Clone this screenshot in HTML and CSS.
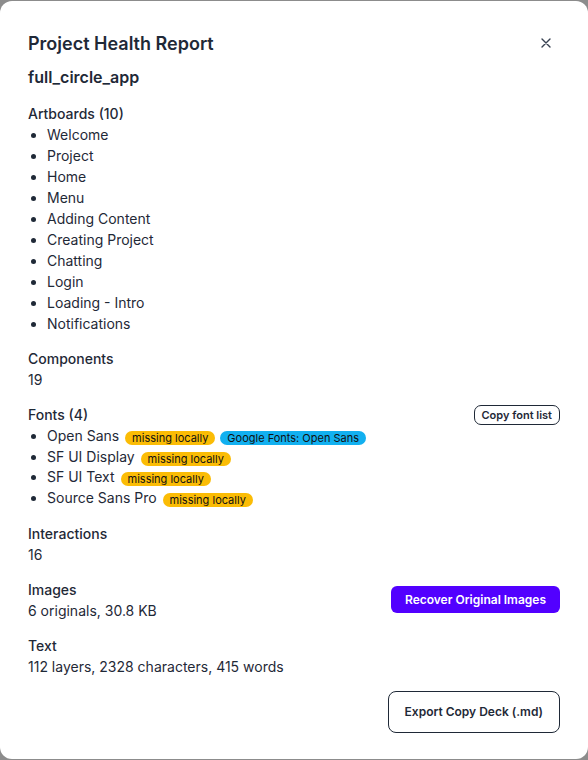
FILE: index.html
```html
<!DOCTYPE html>
<html lang="en">
<head>
    <meta charset="UTF-8">
    <meta name="viewport" content="width=device-width, initial-scale=1.0">
    <title>Project Health Report</title>
    <link rel="stylesheet" href="styles.css">
</head>
<body>
    <div class="modal">
        <div class="modal-header">
            <h2>Project Health Report</h2>
            <button class="close-btn" aria-label="Close">
                <svg width="10" height="10" viewBox="0 0 10 10"><path d="M1 1 L9 9 M9 1 L1 9" stroke="#374151" stroke-width="1.4" stroke-linecap="round"/></svg>
            </button>
        </div>
        <h3 class="project-name">full_circle_app</h3>

        <div class="section">
            <div class="section-title">Artboards (10)</div>
            <ul class="item-list">
                <li>Welcome</li>
                <li>Project</li>
                <li>Home</li>
                <li>Menu</li>
                <li>Adding Content</li>
                <li>Creating Project</li>
                <li>Chatting</li>
                <li>Login</li>
                <li>Loading - Intro</li>
                <li>Notifications</li>
            </ul>
        </div>

        <div class="section">
            <div class="section-title">Components</div>
            <div>19</div>
        </div>

        <div class="section">
            <div class="section-row">
                <div class="section-title">Fonts (4)</div>
                <button class="small-btn">Copy font list</button>
            </div>
            <ul class="item-list font-list">
                <li>Open Sans <span class="badge warn">missing locally</span> <span class="badge info">Google Fonts: Open Sans</span></li>
                <li>SF UI Display <span class="badge warn">missing locally</span></li>
                <li>SF UI Text <span class="badge warn">missing locally</span></li>
                <li>Source Sans Pro <span class="badge warn">missing locally</span></li>
            </ul>
        </div>

        <div class="section">
            <div class="section-title">Interactions</div>
            <div>16</div>
        </div>

        <div class="section section-flex">
            <div>
                <div class="section-title">Images</div>
                <div>6 originals, 30.8 KB</div>
            </div>
            <button class="primary-btn">Recover Original Images</button>
        </div>

        <div class="section">
            <div class="section-title">Text</div>
            <div>112 layers, 2328 characters, 415 words</div>
        </div>

        <div class="modal-footer">
            <button class="outline-btn">Export Copy Deck (.md)</button>
        </div>
    </div>
</body>
</html>
```

FILE: styles.css
```css
html, body {
    height: 100%;
}
body {
    margin: 0;
    background-color: #8c8c8c;
    font-family: Inter, "Noto Sans", sans-serif;
    font-size: 14px;
    color: #1f2937;
}
.modal {
    box-sizing: border-box;
    height: 758px;
    margin-top: 1px;
    background-color: #fff;
    border-radius: 12px;
    padding: 30px 28px 0 28px;
    line-height: 21px;
}
.modal-header {
    display: flex;
    justify-content: space-between;
    align-items: center;
}
.modal-header h2 {
    margin: 0;
    font-size: 18px;
    font-weight: 600;
    line-height: 26px;
    color: #1f2937;
}
.close-btn {
    background: none;
    border: none;
    padding: 0;
    margin-right: 6px;
    margin-top: -2px;
    width: 16px;
    height: 16px;
    display: flex;
    align-items: center;
    justify-content: center;
    cursor: pointer;
}
.project-name {
    margin: 8px 0 14px 0;
    font-size: 16px;
    font-weight: 600;
    line-height: 24px;
}
.section {
    margin-bottom: 14px;
}
.section-title {
    font-weight: 500;
}
.section-row {
    display: flex;
    justify-content: space-between;
    align-items: center;
}
.section-flex {
    display: flex;
    justify-content: space-between;
    align-items: center;
}
.item-list {
    margin: 0;
    padding-left: 19px;
}
.font-list {
    margin-top: 1px;
}
.font-list li {
    line-height: 20.7px;
}
.badge {
    display: inline-block;
    font-size: 11px;
    line-height: 14px;
    padding: 0 7px;
    border-radius: 8px;
    color: #111;
    vertical-align: -1px;
    margin-left: 2px;
}
.badge.warn {
    background-color: #fbbc05;
}
.badge.info {
    background-color: #12b0f0;
    margin-left: 1px;
}
.small-btn {
    font-family: inherit;
    font-size: 11px;
    font-weight: 600;
    color: #1f2937;
    background: #fff;
    border: 1px solid #1f2937;
    border-radius: 7px;
    padding: 0 7px;
    height: 20px;
}
.primary-btn {
    font-family: inherit;
    font-size: 12px;
    font-weight: 600;
    color: #fff;
    background-color: #5200ff;
    border: none;
    border-radius: 6px;
    height: 27px;
    padding: 0 14px;
}
.modal-footer {
    display: flex;
    justify-content: flex-end;
    margin-top: 14px;
}
.outline-btn {
    font-family: inherit;
    font-size: 12px;
    font-weight: 600;
    color: #1f2937;
    background: #fff;
    border: 1px solid #1f2937;
    border-radius: 8px;
    height: 42px;
    padding: 0 16px;
}
```
